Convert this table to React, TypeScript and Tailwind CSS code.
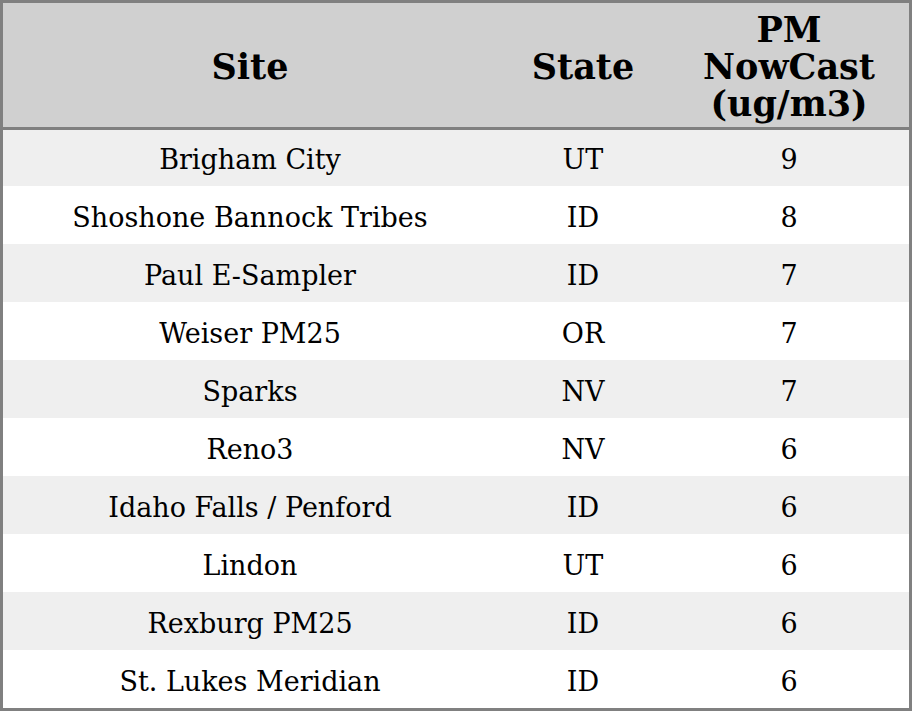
const rows: [string, string, number][] = [
  ['Brigham City', 'UT', 9],
  ['Shoshone Bannock Tribes', 'ID', 8],
  ['Paul E-Sampler', 'ID', 7],
  ['Weiser PM25', 'OR', 7],
  ['Sparks', 'NV', 7],
  ['Reno3', 'NV', 6],
  ['Idaho Falls / Penford', 'ID', 6],
  ['Lindon', 'UT', 6],
  ['Rexburg PM25', 'ID', 6],
  ['St. Lukes Meridian', 'ID', 6],
]

export default function App() {
  return (
    <div className="w-[912px] h-[711px] bg-white font-['DejaVu_Serif',serif] text-black">
      <div className="border-[3px] border-[#808080] h-full">
        <table className="w-full border-collapse table-fixed">
          <colgroup>
            <col className="w-[494px]" />
            <col className="w-[172px]" />
            <col className="w-[240px]" />
          </colgroup>
          <thead>
            <tr className="bg-[#d0d0d0] h-[125px] border-b-[3px] border-[#808080]">
              <th className="pt-[3px] text-[35px] font-bold leading-[37px]">Site</th>
              <th className="pt-[3px] text-[35px] font-bold leading-[37px]">State</th>
              <th className="pt-[3px] text-[35px] font-bold leading-[37px]">
                PM
                <br />
                NowCast
                <br />
                (ug/m3)
              </th>
            </tr>
          </thead>
          <tbody>
            {rows.map(([site, state, value], i) => (
              <tr key={site} className={i % 2 === 0 ? 'bg-[#efefef] h-[58px]' : 'bg-white h-[58px]'}>
                <td className="pt-[4px] text-center text-[27px] leading-[31px]">{site}</td>
                <td className="pt-[4px] text-center text-[27px] leading-[31px]">{state}</td>
                <td className="pt-[4px] text-center text-[27px] leading-[31px]">{value}</td>
              </tr>
            ))}
          </tbody>
        </table>
      </div>
    </div>
  )
}
